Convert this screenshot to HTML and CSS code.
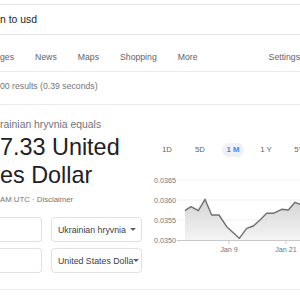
FILE: index.html
```html
<!DOCTYPE html>
<html lang="en">
<head>
  <meta charset="UTF-8" />
  <title>hryvnia to usd - Search</title>
  <link rel="stylesheet" href="styles.css">
</head>
<body>

  <!-- search box -->
  <div class="search">
    <span class="query">n to usd</span>
  </div>

  <nav class="tabs">
    <a href="#">ges</a>
    <a href="#">News</a>
    <a href="#">Maps</a>
    <a href="#">Shopping</a>
    <a href="#">More</a>
    <a href="#" class="settings">Settings</a>
  </nav>

  <div class="stats">00 results (0.39 seconds)</div>

  <!-- currency converter card -->
  <section class="card">
    <div class="conv">
      <div class="equals">rainian hryvnia equals</div>
      <div class="big">7.33 United<br>es Dollar</div>
      <div class="note">AM UTC · Disclaimer</div>

      <div class="row">
        <div class="amount"></div>
        <div class="select">Ukrainian hryvnia<span class="caret"></span></div>
      </div>
      <div class="row">
        <div class="amount"></div>
        <div class="select">United States Dolla<span class="caret"></span></div>
      </div>
    </div>

    <div class="chart">
      <div class="ranges">
        <span class="range">1D</span>
        <span class="range">5D</span>
        <span class="range active">1 M</span>
        <span class="range">1 Y</span>
        <span class="range">5Y</span>
      </div>

      <svg class="plot" width="150" height="88" viewBox="0 0 150 88">
        <defs>
          <linearGradient id="fade" x1="0" y1="0" x2="0" y2="1">
            <stop offset="0" stop-color="#d4d4d4" />
            <stop offset="1" stop-color="#f4f4f4" />
          </linearGradient>
        </defs>
        <line class="grid" x1="27" y1="10" x2="150" y2="10" />
        <line class="grid" x1="27" y1="30" x2="150" y2="30" />
        <line class="grid" x1="27" y1="50" x2="150" y2="50" />
        <text class="ylab" x="4" y="12.5">0.0365</text>
        <text class="ylab" x="4" y="32.5">0.0360</text>
        <text class="ylab" x="4" y="52.5">0.0355</text>
        <text class="ylab" x="4" y="72.5">0.0350</text>
        <polygon fill="url(#fade)" points="35,70 35,40.7 41,36.7 48.3,40.7 55,29.3 61.7,45 69,45 76.7,56.7 89.3,68.3 96.7,58.3 103.3,56 110,50 116.7,43.3 123.3,43.3 131.7,39.3 138.3,40 145,32.3 150,34.3 150,70" />
        <polyline class="line" points="35,40.7 41,36.7 48.3,40.7 55,29.3 61.7,45 69,45 76.7,56.7 89.3,68.3 96.7,58.3 103.3,56 110,50 116.7,43.3 123.3,43.3 131.7,39.3 138.3,40 145,32.3 150,34.3" />
        <line class="axis" x1="27" y1="70.5" x2="150" y2="70.5" />
        <line class="axis" x1="79" y1="70" x2="79" y2="74" />
        <line class="axis" x1="136" y1="70" x2="136" y2="74" />
        <text class="xlab" x="79" y="82">Jan 9</text>
        <text class="xlab" x="136" y="82">Jan 21</text>
      </svg>
    </div>
  </section>

</body>
</html>
```

FILE: styles.css
```css
body {
  font-family: 'Liberation Sans', Arial, sans-serif;
  background-color: #fff;
  margin: 0;
  padding: 0;
  width: 300px;
  height: 300px;
  overflow: hidden;
  color: #202124;
}

.search {
  margin-top: 4px;
  height: 31px;
  box-sizing: border-box;
  border-top: 1px solid #e4e6ea;
  border-bottom: 1px solid #e4e6ea;
  display: flex;
  align-items: center;
}
.query {
  font-size: 10.4px;
  color: #222;
}

.tabs {
  display: flex;
  gap: 21px;
  padding: 16px 0 8px;
  border-bottom: 1px solid #ebebeb;
  white-space: nowrap;
}
.tabs a {
  font-size: 8.7px;
  line-height: 12px;
  color: #5f6368;
  text-decoration: none;
}
.tabs .settings {
  margin-left: auto;
}

.stats {
  margin-top: 8px;
  font-size: 8.7px;
  line-height: 12px;
  color: #70757a;
  white-space: nowrap;
}

.card {
  display: flex;
  margin-top: 12px;
  padding: 13px 0 16px;
  border-top: 1px solid #ebebeb;
  border-bottom: 1px solid #ebebeb;
}
.conv {
  width: 142px;
  flex: none;
}
.equals {
  font-size: 10.4px;
  line-height: 14px;
  color: #70757a;
  white-space: nowrap;
}
.big {
  margin-top: 1px;
  font-size: 23.4px;
  line-height: 28px;
  color: #202124;
  white-space: nowrap;
}
.note {
  margin-top: 5px;
  font-size: 7.8px;
  line-height: 11px;
  color: #70757a;
  white-space: nowrap;
}

.row {
  display: flex;
  gap: 9px;
  height: 25px;
  margin-top: 6px;
}
.note + .row {
  margin-top: 12px;
}
.amount, .select {
  box-sizing: border-box;
  height: 25px;
  border: 1px solid #dfe1e5;
  border-radius: 4px;
}
.amount {
  width: 42px;
  border-left: none;
  border-radius: 0 4px 4px 0;
}
.select {
  width: 91px;
  display: flex;
  align-items: center;
  padding: 0 5px 0 6px;
  font-size: 8.8px;
  color: #3c4043;
  white-space: nowrap;
  overflow: hidden;
}
.caret {
  margin-left: auto;
  flex: none;
  width: 0;
  height: 0;
  border-left: 3px solid transparent;
  border-right: 3px solid transparent;
  border-top: 3px solid #5f6368;
}

.chart {
  flex: 1;
  margin-left: 8px;
}
.ranges {
  display: flex;
  gap: 11px;
  padding-left: 6px;
  margin-top: 25px;
  white-space: nowrap;
}
.range {
  flex: none;
  width: 22px;
  height: 14px;
  border-radius: 7px;
  font-size: 7.8px;
  line-height: 14px;
  text-align: center;
  color: #5f6368;
}
.range.active {
  background-color: #eef1f5;
  color: #4285f4;
  font-weight: bold;
}

.plot {
  display: block;
  margin-top: 13px;
  overflow: visible;
}
.grid {
  stroke: #eeeeee;
  stroke-width: 1;
}
.axis {
  stroke: #c8c8c8;
  stroke-width: 1;
}
.line {
  fill: none;
  stroke: #6f6f6f;
  stroke-width: 1.4;
  stroke-linejoin: round;
}
.ylab, .xlab {
  font-family: 'Liberation Sans', Arial, sans-serif;
  font-size: 7.2px;
  fill: #70757a;
}
.xlab {
  text-anchor: middle;
}
```
